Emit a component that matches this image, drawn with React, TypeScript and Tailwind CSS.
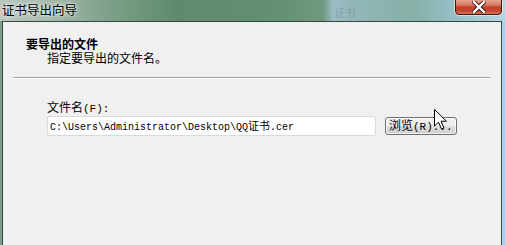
import React from "react";

const cjk = { fontFamily: '"Noto Sans CJK SC", "Noto Sans", sans-serif' };
const mono = { fontFamily: '"Liberation Mono", "Noto Sans CJK SC", monospace' };

function CloseButton() {
  return (
    <div className="absolute left-[455px] top-[-2px] w-[47px] h-[17px] rounded-b-[4px] border border-[#3b1a12] overflow-hidden bg-[linear-gradient(to_bottom,#e9a997_0%,#d97a63_40%,#c2412a_55%,#c4462e_80%,#d9755a_100%)] shadow-[0_0_0_1px_rgba(255,255,255,0.5)] flex items-center justify-center">
      <svg width="14" height="12" viewBox="0 0 14 12">
        <path d="M2 1 L12 11 M12 1 L2 11" stroke="#3a1410" strokeWidth="4.2" strokeLinecap="square" />
        <path d="M2 1 L12 11 M12 1 L2 11" stroke="#ffffff" strokeWidth="2.4" strokeLinecap="square" />
      </svg>
    </div>
  );
}

function Cursor() {
  return (
    <svg
      className="absolute left-[433px] top-[108px]"
      width="16"
      height="24"
      viewBox="0 0 16 24"
    >
      <path
        d="M1.5 1.5 L1.5 18 L5.5 14.2 L8.5 21 L11 20 L8 13.2 L13.5 13.2 Z"
        fill="#ffffff"
        stroke="#000000"
        strokeWidth="1"
        strokeLinejoin="miter"
      />
    </svg>
  );
}

export default function App() {
  return (
    <div className="relative w-[505px] h-[245px] overflow-hidden flex flex-col bg-[linear-gradient(to_right,#b9c8bf_0%,#a3b8ab_10%,#7c9f88_22%,#5f8a6d_35%,#638f72_55%,#6f9a80_64%,#9dbcc6_66%,#93b6b7_70%,#86b0a8_82%,#9cc3cf_92%,#b4d4e4_100%)]">
      {/* title bar */}
      <div className="relative h-[21px] shrink-0">
        <div
          className="absolute left-[2px] top-[2px] text-[12.5px] leading-[15px] text-black [text-shadow:0_0_6px_rgba(255,255,255,0.9),0_0_3px_rgba(255,255,255,0.9)]"
          style={cjk}
        >
          证书导出向导
        </div>
        <div
          className="absolute left-[334px] top-[6px] text-[11px] leading-[13px] text-[#5a6f7a] opacity-30 blur-[0.6px]"
          style={cjk}
        >
          证书
        </div>
        <CloseButton />
      </div>

      {/* body */}
      <div className="flex flex-1 min-h-0">
        <div className="w-[2px] bg-[#7f9b89]" />
        <div className="flex-1 border-l border-t border-r border-[#3a4642] bg-[#f0f0f0] flex flex-col">
          <div className="pl-[23px] pt-[15px]" style={cjk}>
            <div className="text-[12px] leading-[13px] font-bold text-black">要导出的文件</div>
            <div className="pl-[21px] text-[12px] leading-[15px] text-black">指定要导出的文件名。</div>
          </div>
          <div className="ml-[10px] mr-[11px] mt-[12px] h-[2px] border-t border-[#a0a0a0] border-b border-b-white" />
          <div className="pl-[44px] pt-[21px]">
            <div className="text-[12px] leading-[14px] text-black" style={cjk}>
              文件名<span style={mono} className="text-[11px]">(F):</span>
            </div>
            <div className="flex items-start">
              <div className="w-[329px] h-[20px] border border-[#d5dbe3] rounded-[2px] bg-white flex items-center pl-[2px]">
                <span className="text-[10px] leading-[12px] text-black whitespace-pre" style={mono}>
                  C:\Users\Administrator\Desktop\QQ<span className="text-[11px]" style={cjk}>证书</span>.cer
                </span>
              </div>
              <div className="ml-[9px] mt-[1px] w-[72px] h-[18px] border border-[#707070] rounded-[3px] bg-[linear-gradient(to_bottom,#f2f2f2_0%,#ebebeb_50%,#dddddd_51%,#cfcfcf_100%)] flex items-center pl-[3px] shadow-[inset_0_0_0_1px_rgba(255,255,255,0.7)]">
                <span className="text-[12px] leading-[14px] text-black whitespace-pre" style={cjk}>
                  浏览<span style={mono} className="text-[11px]">(R)...</span>
                </span>
              </div>
            </div>
          </div>
        </div>
        <div className="w-[3px] bg-[#a9d0ee]" />
      </div>
      <Cursor />
    </div>
  );
}
